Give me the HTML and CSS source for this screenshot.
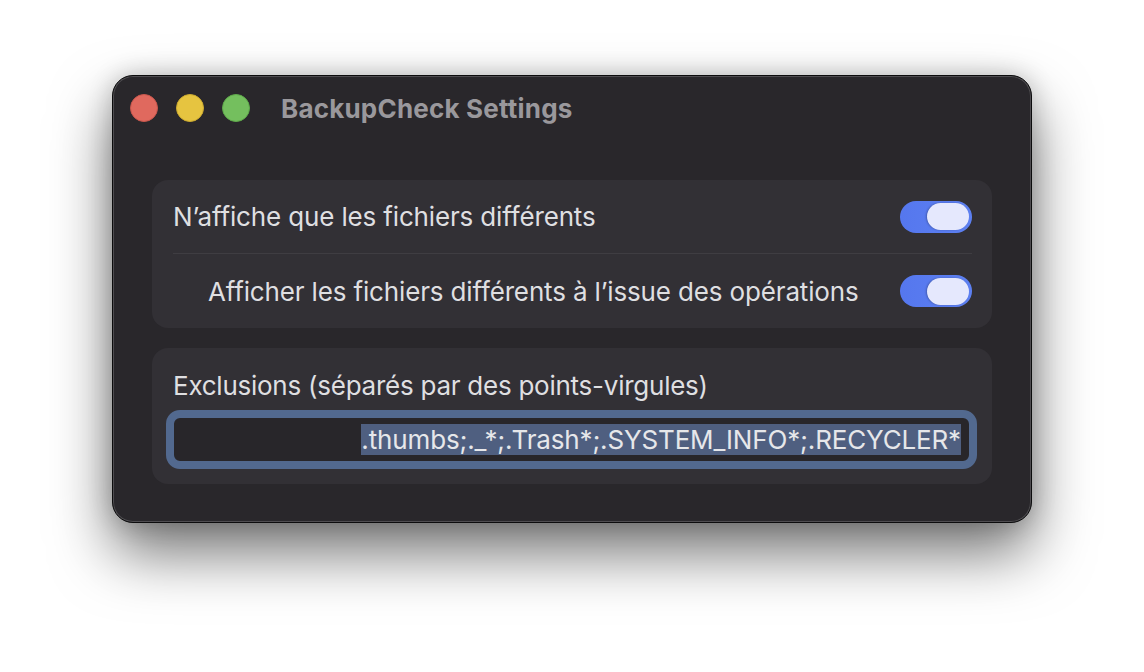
FILE: index.html
```html
<!DOCTYPE html>
<html lang="fr">
<head>
<meta charset="utf-8">
<title>BackupCheck Settings</title>
<link rel="stylesheet" href="styles.css">
</head>
<body>
<div class="page">
  <div class="window">
    <div class="titlebar">
      <div class="lights">
        <span class="light red"></span>
        <span class="light yellow"></span>
        <span class="light green"></span>
      </div>
      <div class="title">BackupCheck Settings</div>
    </div>
    <div class="content">
      <div class="group">
        <div class="row">
          <span class="text">N’affiche que les fichiers différents</span>
          <div class="toggle"><div class="knob"></div></div>
        </div>
        <div class="sep"></div>
        <div class="row">
          <span class="text sub">Afficher les fichiers différents à l’issue des opérations</span>
          <div class="toggle"><div class="knob"></div></div>
        </div>
      </div>
      <div class="group exclusions">
        <div class="label">Exclusions (séparés par des points-virgules)</div>
        <div class="field"><span class="selection">.thumbs;._*;.Trash*;.SYSTEM_INFO*;.RECYCLER*</span></div>
      </div>
    </div>
  </div>
</div>
</body>
</html>
```
FILE: styles.css
```css
html, body {
  margin: 0;
  padding: 0;
  background: #ffffff;
}
body {
  width: 1144px;
  height: 672px;
  overflow: hidden;
  font-family: Inter, "Noto Sans", "Liberation Sans", sans-serif;
}
.page {
  padding: 75px 0 0 112px;
}
.window {
  box-sizing: border-box;
  width: 920px;
  height: 448px;
  background: #29272b;
  border: 1px solid #0c0c0d;
  border-radius: 21px;
  box-shadow:
    inset 0 0 0 1px rgba(255, 255, 255, 0.18),
    0 30px 60px rgba(0, 0, 0, 0.55),
    0 0 24px rgba(0, 0, 0, 0.2);
}
.titlebar {
  height: 64px;
  display: flex;
  align-items: center;
  padding-left: 17px;
}
.lights {
  display: flex;
  gap: 18px;
}
.light {
  width: 28px;
  height: 28px;
  border-radius: 50%;
  box-sizing: border-box;
}
.red { background: #e0695e; border: 1px solid #c9564c; }
.yellow { background: #e6c440; border: 1px solid #cdab2f; }
.green { background: #74bf5e; border: 1px solid #5ea94a; }
.title {
  margin-left: 31px;
  font-weight: 700;
  font-size: 26px;
  color: #9a989c;
  letter-spacing: 0.2px;
}
.content {
  padding: 40px 39px 0 39px;
  display: flex;
  flex-direction: column;
  gap: 20px;
}
.group {
  background: #323035;
  border-radius: 16px;
  padding: 0 20px 0 21px;
}
.row {
  display: flex;
  align-items: center;
  justify-content: space-between;
  height: 73px;
}
.row:last-child {
  height: 74px;
}
.text {
  font-size: 26px;
  color: #dfdfe1;
  letter-spacing: -0.15px;
}
.text.sub {
  padding-left: 35px;
}
.sep {
  height: 1px;
  background: #3f3d42;
}
.toggle {
  width: 72px;
  height: 32px;
  border-radius: 16px;
  background: linear-gradient(90deg, #5577ee, #5d80f2);
  display: flex;
  align-items: center;
  justify-content: flex-end;
  padding: 0 3px;
  box-sizing: border-box;
}
.knob {
  width: 42px;
  height: 27px;
  border-radius: 14px;
  background: #e5e8fd;
  box-shadow: -1px 0 2px rgba(0, 0, 0, 0.25);
}
.exclusions {
  padding-top: 23px;
  padding-bottom: 15px;
}
.label {
  font-size: 26px;
  line-height: 30px;
  color: #dfdfe1;
  letter-spacing: -0.25px;
}
.field {
  margin: 9px -5px 0 -7px;
  height: 59px;
  box-sizing: border-box;
  border: 8px solid #52698f;
  border-radius: 14px;
  background: #28262a;
  display: flex;
  align-items: center;
  justify-content: flex-end;
  padding-right: 8px;
}
.selection {
  background: #4f5f80;
  color: #e6e7ea;
  font-size: 26px;
  line-height: 31px;
  letter-spacing: -0.15px;
}
```
